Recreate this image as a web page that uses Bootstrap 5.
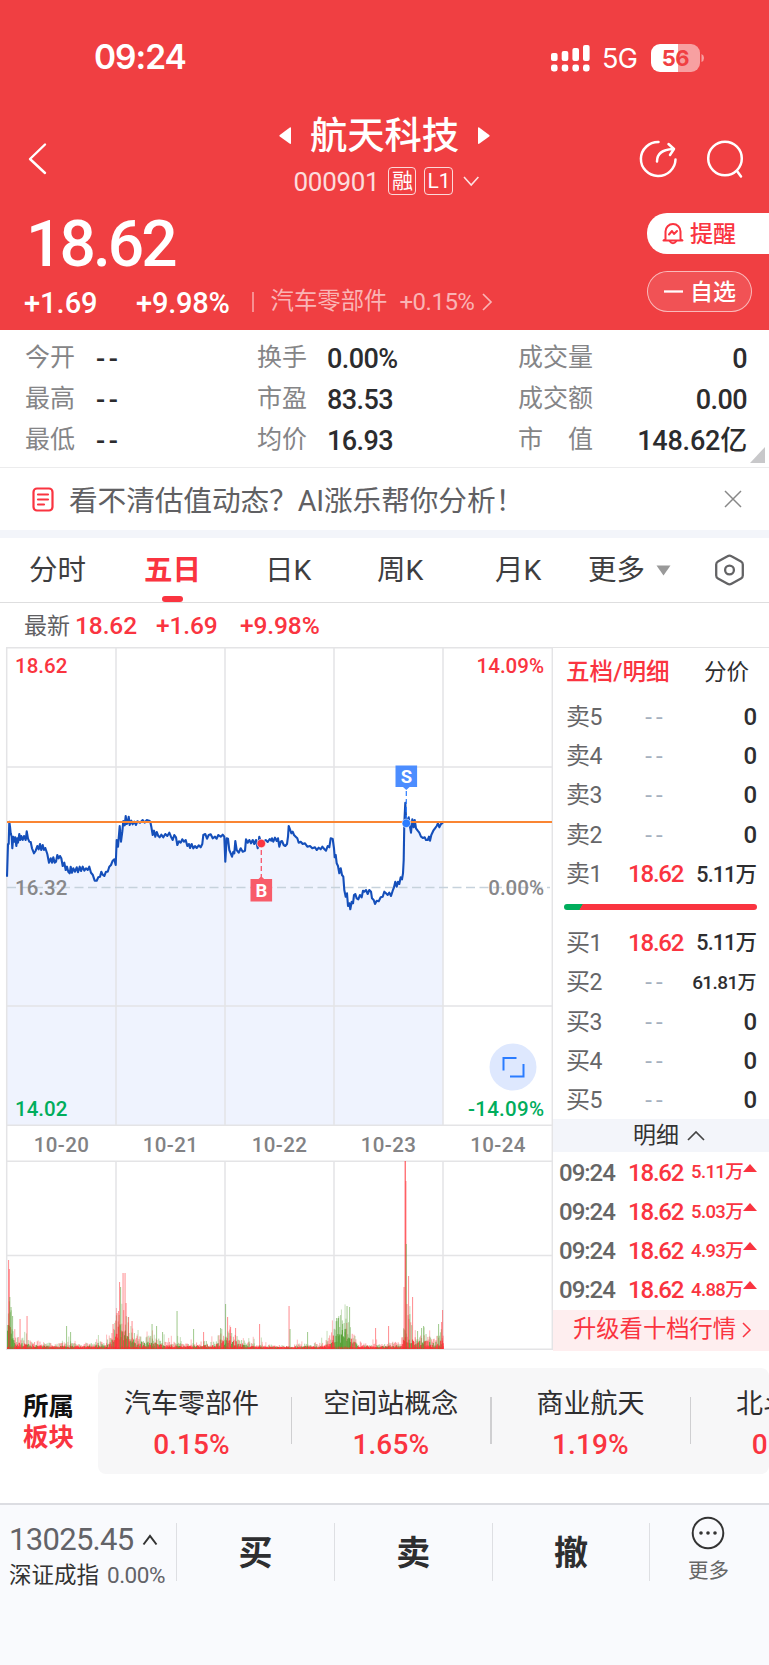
<!DOCTYPE html>
<html lang="zh-CN">
<head>
<meta charset="utf-8">
<meta name="viewport" content="width=device-width, initial-scale=1">
<title>航天科技 000901</title>
<link href="https://cdn.jsdelivr.net/npm/bootstrap@5.3.0/dist/css/bootstrap.min.css" rel="stylesheet">
<style>
:root{--up:#fa3440;--dn:#00ad5c;--line:#e4e4e5}
body{width:769px;height:1665px;overflow:hidden;background:#fff;color:#2e2e30;font-family:Roboto,"Noto Sans CJK SC",sans-serif;line-height:1;white-space:nowrap}
svg{display:block;flex:none}
.up{color:var(--up)}
.med{font-weight:500}
.hero{height:330px;background:#f03f42;color:#fff}
.statusbar{height:112px;padding:3px 65px 0 94px}
.clock{font:600 33.5px/1 Inter,sans-serif;letter-spacing:-1px;padding-top:1px}
.net{font:400 27px/1 Inter,sans-serif;letter-spacing:-.8px;margin:2px 14px 0 12px}
.batt{width:49px;height:28px;border-radius:9px;background:linear-gradient(90deg,#fff 56%,#f7a0a1 56%);color:#f03f42;font:700 22px/28px Inter,sans-serif;letter-spacing:-.5px}
.titlebar{height:90px;padding:0 24px 0 28px;display:grid;grid-template-columns:140px 1fr 140px}
.stockname{font-size:37.3px;font-weight:500;margin:0 18px 0 18px;padding-top:2px;line-height:35px}
.code{font-size:26px;opacity:.82;letter-spacing:-.3px}
.tagbox{height:28px;border:1.3px solid rgba(255,255,255,.8);border-radius:4px;font-size:21px;line-height:26px;text-align:center}
.bigprice{font-size:64px;font-weight:500;letter-spacing:-2.9px;line-height:1}
.remind{width:121px;height:41px;border-radius:20px 0 0 20px;background:#fff;color:var(--up);font-size:23px;font-weight:500;padding-left:15px}
.fav{width:105px;height:41px;border-radius:21px;border:1.3px solid rgba(255,255,255,.6);background:rgba(255,255,255,.1);font-size:23px;font-weight:500;padding-left:16px}
.soft{color:#fab4b5}
.stats{height:138px;padding:7px 22px 8px 25px;border-bottom:1.5px solid #ececed;position:relative}
.statrow{display:grid;grid-template-columns:71px 161px 70px 191px 90px 1fr;height:41.2px;align-items:center;font-size:25px;color:#858587}
.statrow b{font-weight:500;font-size:27px;color:#2c2c2e;letter-spacing:-.6px;padding-top:3px}
.statrow b.dash{letter-spacing:3.5px}
.corner{position:absolute;right:4px;bottom:4px}
.notice{height:62px;padding:0 27px 0 32px;font-size:28.7px;color:#606063}
.band{height:8px;background:#f3f5fa}
.tabs{height:65px;border-bottom:1.5px solid #dededf;display:grid;grid-template-columns:115px 121px 112px 118px 93px 127px 28px;padding-left:29px;align-items:center;font-size:28.5px;color:#3e3e40}
.tabs>span{padding-top:3px}
.tabs .on{color:var(--up);font-weight:700;position:relative;height:100%}
.tabs .on::after{content:"";position:absolute;left:18px;bottom:0;width:21px;height:6px;border-radius:3px;background:var(--up)}
.latest{height:44px;padding:3px 0 0 24px;font-size:24.5px;color:var(--up);font-weight:500;letter-spacing:-.1px}
.board{height:703px}
.book{width:216px;border-top:1.5px solid var(--line)}
.bookhead{height:48px;padding:1px 20px 0 13px;font-size:23.6px}
.qrow{display:grid;grid-template-columns:62px 64px 1fr;height:39.4px;align-items:center;padding:2px 13px 0 13px;font-size:24px;letter-spacing:-1.2px}
#bids .qrow{height:39.3px}
.qrow .lab{color:#666668;font-size:24px;letter-spacing:-.4px}
.qrow .lab i{font-style:normal;font-size:23px}
.none{color:#a5b0be;text-align:center;padding-right:8px;letter-spacing:4px}
.v22{font-size:21.5px;font-weight:500;letter-spacing:-.9px}.v19{font-size:19px;font-weight:500;letter-spacing:-.6px}
.ratio{height:6px;width:193px;margin:11px 0 12.5px 11px;border-radius:3px;background:linear-gradient(120deg,var(--dn) 16px,var(--up) 16.5px)}
.more-band{height:33.5px;background:#f3f5fa;font-size:23px;color:#333;padding-left:16px}
.drow{display:grid;grid-template-columns:69px 61px 54px 14px;height:39.3px;align-items:center;padding:1px 0 0 6px;font-size:24px;letter-spacing:-1.2px}
.drow .clk{letter-spacing:-1px;color:#666}
.upgrade{height:41px;background:#feeeef;font-size:23.3px}
.sectors{height:106px;margin-top:18px;overflow:hidden}
.own{width:98px;font-size:25.5px;line-height:31px;font-weight:700;color:#111;padding:1px 0 0 23px}
.strip{background:#f7f7f8;border-radius:8px;width:671px;overflow:hidden}
.sector{width:199.6px;flex:none;font-size:27px;position:relative;padding:7px 2px 0 0}
.sector:first-child{width:194px;padding-right:7px}
.sector::after{content:"";position:absolute;right:0;top:29px;height:47px;width:1.5px;background:#cfcfd1}
.sector b{font-size:28px;font-weight:500;letter-spacing:.1px;margin-top:13px}
.dock{height:162px;margin-top:29px;border-top:2px solid #dcdde2;background:#f9fafd}
.dockcell{height:58px;margin-top:18px;border-left:1.5px solid #dedfe3;width:157.8px;font-size:34px;font-weight:700}
.dockcell.trade{padding-top:2px}
.idx{width:176px;padding:19px 0 0 9px}
</style>
</head>
<body>
<header class="hero">
  <div class="statusbar d-flex justify-content-between align-items-center">
    <span class="clock">09:24</span>
    <div class="d-flex align-items-center">
      <svg width="39" height="28" fill="#fff"><rect x="0" y="9" width="6.6" height="8" rx="2"/><rect x="10.7" y="7" width="6.6" height="10" rx="2"/><rect x="21.4" y="4" width="6.6" height="13" rx="2"/><rect x="32" y="1" width="6.6" height="16" rx="2"/><rect x="0" y="20.5" width="6.6" height="7" rx="2.4"/><rect x="10.7" y="20.5" width="6.6" height="7" rx="2.4"/><rect x="21.4" y="20.5" width="6.6" height="7" rx="2.4"/><rect x="32" y="20.5" width="6.6" height="7" rx="2.4"/></svg>
      <span class="net">5G</span>
      <div class="batt text-center">56</div>
      <svg width="4" height="10"><path d="M1.5 1Q4 2 4 5T1.5 9z" fill="#f7a0a1"/></svg>
    </div>
  </div>
  <div class="titlebar">
    <svg class="mt-1" width="20" height="90" fill="none" stroke="#fff" stroke-width="2.4" stroke-linecap="round" stroke-linejoin="round"><path d="M17 28.5L2 43l15 14"/></svg>
    <div class="d-flex flex-column align-items-center">
      <div class="d-flex align-items-center" style="margin:5px 4px 0 0">
        <svg width="13" height="18" fill="#fff"><path d="M12 1v15q0 1.500-1.500.5L.8 9.500Q0 8.700.8 8L10.500.7Q12-.3 12 1z"/></svg>
        <span class="stockname">航天科技</span>
        <svg width="13" height="18" fill="#fff"><path d="M1 1v15q0 1.500 1.500.5l9.700-7q.8-.8 0-1.500L2.500.7Q1-.3 1 1z"/></svg>
      </div>
      <div class="d-flex align-items-center" style="margin:12px 0 0 2px">
        <span class="code" style="padding-top:3px">000901</span>
        <span class="tagbox" style="width:28px;margin-left:9px">融</span>
        <span class="tagbox" style="width:29px;margin-left:8px">L1</span>
        <svg class="ms-2" width="20" height="12" fill="none" stroke="#fff" stroke-width="1.6" opacity=".85"><path d="M3 2l7.200 8 7.200-8"/></svg>
      </div>
    </div>
    <div class="d-flex justify-content-end" style="padding-top:28px">
      <svg width="40" height="42" fill="none" stroke="#fff" stroke-width="2.500" stroke-linecap="round" stroke-linejoin="round"><path d="M19.500 2A17.300 17 0 1 0 36.500 19.500M18 21.500C18 13.500 23 9.500 34 9M29.500 4L35 9 31 15"/></svg>
      <svg style="margin-left:26px" width="40" height="42" fill="none" stroke="#fff" stroke-width="2.500" stroke-linecap="round"><circle cx="20" cy="18.500" r="16.800"/><path d="M32 31l4 5.500"/></svg>
    </div>
  </div>
  <div class="d-flex justify-content-between">
    <div>
      <div class="bigprice" style="padding:11px 0 0 26px">18.62</div>
      <div class="d-flex align-items-center" style="padding:4px 0 0 24px;height:46px">
        <span class="med" style="font-size:29px;width:112px;padding-top:2px">+1.69</span><span class="med" style="font-size:29px;letter-spacing:-.2px;width:116px;padding-top:2px">+9.98%</span>
        <span class="soft" style="width:1.500px;height:20px;background:currentColor;opacity:.7"></span>
        <span class="soft" style="font-size:23.400px;margin-left:17px">汽车零部件</span>
        <span class="soft" style="font-size:24px;margin-left:12px;letter-spacing:-.5px">+0.15%</span>
        <svg style="margin-left:7px" width="12" height="18" fill="none" stroke="#fab4b5" stroke-width="1.700"><path d="M2 1l8 8-8 8"/></svg>
      </div>
    </div>
    <div style="width:122px;padding-top:11px">
      <div class="remind d-flex align-items-center w-100">
        <svg width="22" height="26" viewBox="0 0 22 26" fill="none" stroke="#fa3440" stroke-width="2" stroke-linejoin="round" stroke-linecap="round"><path d="M3.500 18V10.500a7.500 7.500 0 0 1 15 0V18l2 1.500h-19zM7.500 20q3.500 4.500 7 0M7 13.500L10 10l2 3 3-3"/></svg>
        <span style="margin-left:6px;padding-top:2px">提醒</span></div>
      <div class="fav d-flex align-items-center" style="margin-top:17px"><svg width="19" height="3"><path d="M0 1.500h19" stroke="#fff" stroke-width="2.300"/></svg><span style="margin-left:7px;padding-top:2px">自选</span></div>
    </div>
  </div>
</header>

<section class="stats">
  <div class="statrow"><span>今开</span><b class="dash">--</b><span>换手</span><b>0.00%</b><span>成交量</span><b class="text-end">0</b></div>
  <div class="statrow"><span>最高</span><b class="dash">--</b><span>市盈</span><b>83.53</b><span>成交额</span><b class="text-end">0.00</b></div>
  <div class="statrow"><span>最低</span><b class="dash">--</b><span>均价</span><b>16.93</b><span>市　值</span><b class="text-end" style="letter-spacing:-.2px">148.62亿</b></div>
  <svg class="corner" width="15" height="16"><path d="M15 0v16H0z" fill="#c8c8ca"/></svg>
</section>

<section class="notice d-flex align-items-center">
  <svg width="22" height="25" fill="none" stroke="#fa3440" stroke-width="2.200" stroke-linecap="round"><rect x="1.500" y="1.500" width="19" height="22" rx="3.500"/><path d="M6 7.500h10M6 12.500h10M6 17.500h6"/></svg>
  <span style="margin-left:15px;padding-top:4px;letter-spacing:-.1px">看不清估值动态？AI涨乐帮你分析！</span>
  <svg class="ms-auto" width="18" height="18" stroke="#888" stroke-width="1.500"><path d="M1 1l16 16M17 1L1 17"/></svg>
</section>
<div class="band"></div>

<nav class="tabs">
  <span>分时</span><span class="on d-flex align-items-center">五日</span><span>日K</span><span>周K</span><span>月K</span>
  <span class="d-flex align-items-center">更多<svg style="margin:-2px 0 0 11px" width="15" height="11"><path d="M.5.5h14L7.500 10.500z" fill="#999"/></svg></span>
  <svg width="30" height="32" fill="none" stroke="#636365" stroke-width="2.300" stroke-linejoin="round"><path d="M12.500 2.200q2-1.200 4 0L26 7.500q1.800 1 1.800 3v11q0 2-1.800 3l-9.500 5.300q-2 1.200-4 0L3 24.500q-1.800-1-1.800-3v-11q0-2 1.800-3z"/><circle cx="14.500" cy="16" r="4.400"/></svg>
</nav>

<div class="latest d-flex align-items-center"><span style="font-size:23px;color:#606063;font-weight:400;width:51px">最新</span><span style="width:81px">18.62</span><span style="width:84px">+1.69</span><span>+9.98%</span></div>

<main class="board d-flex">
  <svg id="chart" width="553" height="703" viewBox="0 647 553 703" font-family="Roboto,sans-serif">
    <g id="area"></g>
    <g stroke="#e4e4e6" stroke-width="1.500" fill="none"><path d="M6.700 648V1350M552.300 648V1350M6 647.800H553M6 1161.300H553M6 1255.500H553M6 1349.300H553"/><path d="M116 648V1125M225 648V1125M334 648V1125M443 648V1125M116 1161V1350M225 1161V1350M334 1161V1350M443 1161V1350M6 767H553M6 1006H443M443 1006H553M6 1125.200H553"/></g>
    <path d="M7 887.500H550" stroke="#c6d2dc" stroke-width="1.300" stroke-dasharray="9 4.500"/>
    <g id="line"></g>
    <path d="M7 822H552" stroke="#fa8532" stroke-width="2"/>
    <g font-size="20.500" font-weight="500">
      <text x="15" y="672.500" fill="#fa3440">18.62</text><text x="544" y="672.500" text-anchor="end" fill="#fa3440">14.09%</text>
      <text x="15" y="894.800" fill="#88888a">16.32</text><text x="544" y="894.800" text-anchor="end" fill="#88888a">0.00%</text>
      <text x="15" y="1116" fill="#00ad5c">14.02</text><text x="544" y="1116" text-anchor="end" textLength="76" fill="#00ad5c">-14.09%</text>
    </g>
    <g font-size="20.500" fill="#828284" text-anchor="middle" letter-spacing=".4" font-weight="500"><text x="61.500" y="1151.500">10-20</text><text x="170.500" y="1151.500">10-21</text><text x="279.500" y="1151.500">10-22</text><text x="388.500" y="1151.500">10-23</text><text x="498" y="1151.500">10-24</text></g>
    <path d="M261.300 850V878" stroke="#f7566a" stroke-width="1.300" stroke-dasharray="5 3"/><circle cx="261.300" cy="843.500" r="4.300" fill="#fa3440" stroke="#fff" stroke-width=".6"/>
    <path d="M250.500 879h8l2.800-2.800 2.800 2.800h8v22.500h-21.600z" fill="#f85c6a"/><text x="261.400" y="897.200" text-anchor="middle" font-size="18.500" font-weight="700" fill="#fff">B</text>
    <path d="M406.300 791V818" stroke="#2a7cff" stroke-width="1.200" stroke-dasharray="5 3"/><circle cx="406.300" cy="823.300" r="4.300" fill="#2a7cff" stroke="#fff" stroke-width=".6"/>
    <path d="M395.500 765.500h21.600v21.500h-7.500l-3.300 3-3.300-3h-7.500z" fill="#4c8dff"/><text x="406.400" y="783" text-anchor="middle" font-size="18.500" font-weight="700" fill="#fff">S</text>
    <circle cx="513" cy="1067" r="23.500" fill="#dee8fe"/><path d="M503.500 1070.500V1058H516.500M523.500 1064V1076.500H510" fill="none" stroke="#2a7cff" stroke-width="2"/>
    <g id="vol"></g>
  </svg>

  <aside class="book">
    <div class="bookhead d-flex justify-content-between align-items-center"><span class="up med">五档/明细</span><span style="font-size:22.500px">分价</span></div>
    <div id="asks"></div>
    <div class="ratio"></div>
    <div id="bids"></div>
    <div class="more-band d-flex align-items-center justify-content-center">明细<svg class="ms-2" width="18" height="10" fill="none" stroke="#444" stroke-width="1.700"><path d="M1 9l8-8 8 8"/></svg></div>
    <div id="deals"></div>
    <div class="upgrade up d-flex align-items-center" style="padding-left:20px">升级看十档行情<svg style="margin-left:6px" width="10" height="16" fill="none" stroke="#fa3440" stroke-width="1.500"><path d="M1 1l7 7-7 7"/></svg></div>
  </aside>
</main>

<section class="sectors d-flex">
  <div class="own d-flex flex-column justify-content-center"><span>所属</span><span class="up">板块</span></div>
  <div class="strip d-flex">
    <div class="sector d-flex flex-column align-items-center justify-content-center"><span>汽车零部件</span><b class="up">0.15%</b></div>
    <div class="sector d-flex flex-column align-items-center justify-content-center"><span>空间站概念</span><b class="up">1.65%</b></div>
    <div class="sector d-flex flex-column align-items-center justify-content-center"><span>商业航天</span><b class="up">1.19%</b></div>
    <div class="sector d-flex flex-column align-items-center justify-content-center"><span>北斗导航</span><b class="up">0.98%</b></div>
  </div>
</section>

<footer class="dock d-flex">
  <div class="idx">
    <div class="d-flex align-items-center" style="font-size:31px;letter-spacing:-.7px;color:#636368">13025.45<svg style="margin-left:8px" width="16" height="12" fill="none" stroke="#333" stroke-width="2"><path d="M1.500 10.500L8 2l6.500 8.500"/></svg></div>
    <div class="d-flex align-items-center" style="font-size:22.500px;color:#333;margin-top:8px;height:24px">深证成指<span style="margin-left:8px;color:#636368;letter-spacing:-.5px">0.00%</span></div>
  </div>
  <div class="dockcell trade d-flex align-items-center justify-content-center">买</div>
  <div class="dockcell trade d-flex align-items-center justify-content-center">卖</div>
  <div class="dockcell trade d-flex align-items-center justify-content-center">撤</div>
  <div class="dockcell d-flex flex-column align-items-center" style="width:117px;font-weight:400">
    <svg style="margin-top:-7px" width="34" height="36"><circle cx="17" cy="17" r="15.300" fill="none" stroke="#333" stroke-width="2"/><g fill="#333"><circle cx="10" cy="17" r="1.800"/><circle cx="17" cy="17" r="1.800"/><circle cx="24" cy="17" r="1.800"/></g></svg>
    <span style="font-size:20.500px;color:#666;margin-top:9px">更多</span>
  </div>
</footer>

<script>
const el=(id,h)=>document.getElementById(id).innerHTML=h;
// order book
const q=(s,n,p,v,c)=>`<div class="qrow"><span class="lab">${s}<i>${n}</i></span><span class="${p?'up med':'none'}">${p||'--'}</span><span class="text-end ${c||'med'}">${v}</span></div>`;
el('asks',[5,4,3,2].map(n=>q('卖',n,'','0')).join('')+q('卖',1,'18.62','5.11万','v22'));
el('bids',q('买',1,'18.62','5.11万','v22')+q('买',2,'','61.81万','v19')+[3,4,5].map(n=>q('买',n,'','0')).join(''));
el('deals',['5.11万','5.03万','4.93万','4.88万'].map(v=>`<div class="drow"><span class="med clk">09:24</span><span class="up med">18.62</span><span class="up v19" style="font-size:18.500px;padding-left:2px">${v}</span><svg width="14" height="8" style="margin-top:-10px"><path d="M7 0l7 8H0z" fill="#fa3440"/></svg></div>`).join(''));
// price series, in thirds of a pixel
const a='21,710 24,612 26,612 28,545 30,560 32,580 35,590 37,625 40,590 43,605 46,592 49,618 52,595 54,608 58,582 61,600 64,588 68,600 72,588 77,600 80,574 84,596 88,605 92,606 96,625 102,640 107,632 112,618 116,628 120,612 124,630 128,615 132,630 136,624 142,642 147,668 152,655 156,668 160,652 164,668 168,665 172,645 176,655 180,648 184,655 188,678 193,668 197,690 201,680 205,695 209,700 212,680 216,698 220,685 225,695 230,682 234,697 239,680 243,693 248,680 253,692 258,685 263,690 268,680 273,698 278,704 284,722 290,722 295,712 300,710 304,695 308,704 313,708 318,695 323,695 328,680 333,675 338,662 343,658 347,675 350,600 354,620 359,558 363,605 367,575 370,543 374,556 377,528 380,552 383,548 386,530 389,555 394,542 398,553 403,545 408,555 412,544 420,548 428,540 434,548 440,540 447,542 451,545 454,560 458,585 462,572 466,590 470,576 475,588 479,592 484,584 490,592 496,582 502,588 508,578 513,590 518,600 523,585 528,592 532,615 537,604 542,608 547,598 552,605 557,600 562,618 567,612 570,624 575,612 580,625 585,618 590,624 596,616 602,622 607,612 610,585 616,582 621,596 626,585 632,583 638,595 645,590 650,596 655,585 662,590 668,584 673,590 676,665 680,595 684,596 688,630 692,640 696,650 700,635 703,640 706,603 710,630 716,638 722,625 728,635 735,632 738,598 743,608 748,600 753,610 758,600 763,612 768,600 773,625 778,590 784,610 797,600 803,606 809,597';
const b='4,302 6,295 10,305 15,293 20,303 24,295 28,320 32,305 36,303 41,315 46,318 51,312 54,290 56,258 60,268 64,280 68,275 72,285 77,290 82,295 86,308 92,305 98,312 105,310 112,320 120,318 127,325 135,322 140,330 146,323 152,328 157,320 163,327 168,332 173,318 178,322 182,295 188,297 192,325 194,352 197,345 200,370 204,378 208,400 212,385 216,405 220,410 223,450 227,470 231,460 234,498 238,490 241,508 245,485 249,490 252,465 256,462 260,475 265,478 270,465 275,472 279,452 283,455 288,450 293,462 298,450 303,455 306,475 311,480 315,492 320,482 326,484 332,472 338,470 343,455 348,460 353,465 358,458 363,468 368,452 372,442 376,425 380,440 384,425 388,432 392,412 396,418 399,400 401,360 403,250 406,188 409,250 413,240 416,232 419,255 423,278 427,238 431,262 434,240 438,265 443,272 448,278 453,290 459,294 464,292 468,300 473,300 477,290 480,302 484,285 490,272 495,265 500,258 504,250 508,262 513,252 519,248';
const cv=(s,ox,oy)=>s.split(' ').map(p=>{const[x,y]=p.split(',');return (x/3+ox).toFixed(1)+' '+(y/3+oy).toFixed(1)});
const pts=[...cv(a,0,640),...cv(b,270,740)].join('L');
el('area',`<path d="M${pts}V1125H7z" fill="#eff3fe"/>`);
el('line',`<path d="M${pts}" fill="none" stroke="#154fba" stroke-width="2.100" stroke-linejoin="round"/>`);
// volume: envelope [x, height] with a fixed pseudo-random texture, then single spikes
const env=[[7,60],[9,40],[12,24],[16,10],[30,7],[45,5],[60,5],[90,5],[108,8],[114,18],[118,38],[124,30],[130,18],[136,10],[150,11],[165,6],[190,5],[215,7],[224,20],[230,15],[240,8],[255,4],[285,3],[300,4],[325,6],[332,18],[337,26],[345,30],[351,16],[358,6],[375,4],[400,6],[404,20],[409,30],[413,12],[425,12],[434,10],[443,18]];
const lift=x=>{let i=1;while(i<env.length-1&&env[i][0]<x)i++;const[p,q]=[env[i-1],env[i]];return p[1]+(q[1]-p[1])*(x-p[0])/(q[0]-p[0])};
let seed=7;const rnd=()=>(seed=(seed*16807)%2147483647)/2147483647;
let v='';const bar=(x,h,c,o)=>v+=`<rect x="${x.toFixed(1)}" y="${(1349-h).toFixed(1)}" width="1.100" height="${h.toFixed(1)}" fill="${c}" opacity="${o}"/>`;
const R='#ff2d34',G='#4f9d2d';
for(let x=7;x<443;x+=.9){const e=lift(x),gz=(x>334&&x<350)||(x>9&&x<14);const c=()=>rnd()<(gz?.15:.6)?R:G;
 bar(x,e*(.4+rnd()*.9),c(),.4);if(rnd()<.12)bar(x,e*1.3+rnd()*7,c(),.3);bar(x,e*(.2+rnd()*.5),c(),.8);bar(x,1+rnd()*1.800,R,.8)}
[[8,89,R],[8.800,80,R],[9.300,52,G],[10.500,42,G],[12,33,G],[19.500,30,R],[26.500,33,R],[66,23,G],[70,17,G],[112.500,25,R],[116.500,36,R],[118,38,R],[119,67,R],[120,62,G],[122.500,76,R],[124.500,76,R],[125.500,46,R],[128,32,R],[131.500,28,R],[151.500,25,G],[156,23,G],[162,17,G],[176.500,38,G],[193,20,G],[203,17,R],[220,21,G],[225,45,G],[227,32,R],[230,22,R],[235,21,R],[259,25,R],[288.500,43,R],[289.500,20,G],[307,17,G],[336,31,G],[338,31,G],[342,25,G],[346.500,43,G],[349,42,G],[375,21,R],[388,23,R],[403.500,62,R],[404.500,188,R],[404.900,188,R],[405.400,168,R],[405.800,105,G],[406.400,45,R],[408,73,R],[412,52,R],[417,18,G],[421,21,G],[423,23,G],[438,25,G],[441,27,R],[442,39,R]].forEach(s=>bar(s[0],s[1],s[2],.5));
el('vol',v);
</script>
<script src="https://cdn.jsdelivr.net/npm/bootstrap@5.3.0/dist/js/bootstrap.bundle.min.js"></script>
</body>
</html>
